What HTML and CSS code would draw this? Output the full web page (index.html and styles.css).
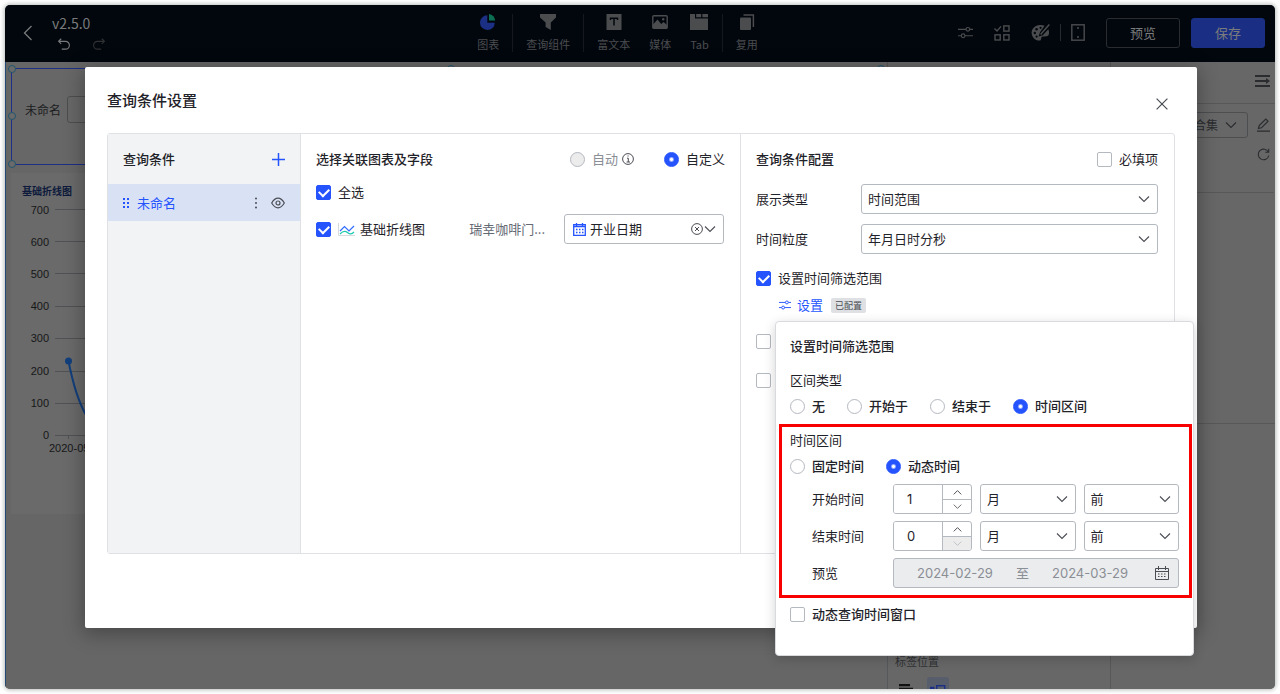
FILE: index.html
```html
<!DOCTYPE html>
<html lang="zh-CN">
<head>
<meta charset="utf-8">
<meta name="viewport" content="width=device-width, initial-scale=1">
<title>查询条件设置</title>
<link rel="stylesheet" href="styles.css">
</head>
<body>
<svg class="sprite" aria-hidden="true">
  <symbol id="chevron" viewBox="0 0 12 12"><path d="M1 3.5 6 8.5 11 3.5" fill="none" stroke="currentColor" stroke-width="1.1"/></symbol>
  <symbol id="chevron-up" viewBox="0 0 12 12"><path d="M1 8.5 6 3.5 11 8.5" fill="none" stroke="currentColor" stroke-width="1.3"/></symbol>
  <symbol id="undo" viewBox="0 0 14 14"><path d="M4 .8 1.2 3.6 4 6.4M1.2 3.6H8.6a4.2 4.2 0 0 1 0 8.4H4.6" fill="none" stroke="currentColor" stroke-width="1.2"/></symbol>
  <symbol id="sliders" viewBox="0 0 14 12"><g fill="none" stroke="currentColor" stroke-width="1.1"><path d="M0 3H7.5M11 3H14M0 9H3M6.5 9H14"/><circle cx="9.2" cy="3" r="1.7"/><circle cx="4.8" cy="9" r="1.7"/></g></symbol>
</svg>

<div class="app">
  <header class="topbar">
    <div class="topbar-left">
      <button class="icon-btn" aria-label="返回"><svg width="10" height="16" viewBox="0 0 10 16"><path d="M8.5 1 1.5 8l7 7" fill="none" stroke="currentColor" stroke-width="1.3"/></svg></button>
      <div class="version">
        <span>v2.5.0</span>
        <div class="history">
          <button class="icon-btn" aria-label="撤销"><svg width="14" height="13"><use href="#undo"/></svg></button>
          <button class="icon-btn redo" aria-label="重做"><svg width="14" height="13"><use href="#undo"/></svg></button>
        </div>
      </div>
    </div>
    <nav class="tools">
      <button class="tool"><svg width="16" height="16" viewBox="0 0 16 16"><path d="M7.3 1.2V8.7H14.8A7.4 7.4 0 1 1 7.3 1.2Z" fill="#1b3084"/><path d="M9 0A7 7 0 0 1 15.2 6.6H9Z" fill="#0c6f53"/></svg>图表</button>
      <i class="rule"></i>
      <button class="tool"><svg width="16" height="16" viewBox="0 0 16 16"><path d="M0 0H16V3.5L10.8 8.4V16L5.6 13V8.4L0 3.5Z" fill="currentColor"/></svg>查询组件</button>
      <i class="rule"></i>
      <div class="tool-group">
        <button class="tool"><svg width="16" height="16" viewBox="0 0 16 16"><path d="M1 0H15V16H1Z" fill="currentColor" stroke="currentColor"/><path d="M4.5 6V4.2H11.5V6M8 4.2V11.4" fill="none" stroke="#02070e" stroke-width="1.5"/></svg>富文本</button>
        <button class="tool"><svg width="16" height="16" viewBox="0 0 16 16"><rect x=".8" y="1.8" width="14.4" height="12.6" rx="1" fill="none" stroke="currentColor" stroke-width="1.4"/><path d="M1 10.5 5.5 5.5 9.2 10 11.6 8 15 11V14H1Z" fill="currentColor"/><circle cx="11.2" cy="5.3" r="1.2" fill="currentColor"/></svg>媒体</button>
        <button class="tool"><svg width="18" height="16" viewBox="0 0 18 16"><path d="M0 0H5V4.6H18V16H0ZM6.2 0H11.2V3.2H6.2ZM12.4 0H18V3.2H12.4Z" fill="currentColor"/></svg>Tab</button>
      </div>
      <i class="rule"></i>
      <button class="tool"><svg width="16" height="16" viewBox="0 0 16 16"><rect x="1" y="3.5" width="11" height="12.5" rx="1" fill="currentColor"/><path d="M4.5 1H14.4V13" fill="none" stroke="currentColor" stroke-width="1.5"/></svg>复用</button>
    </nav>
    <div class="topbar-right">
      <button class="icon-btn" aria-label="参数"><svg width="15" height="13"><use href="#sliders"/></svg></button>
      <button class="icon-btn" aria-label="组件"><svg width="16" height="16" viewBox="0 0 16 16"><g fill="none" stroke="currentColor" stroke-width="1.4"><path d="M.5 3.6 3 6 7 1.4"/><rect x="9.8" y=".9" width="5.2" height="5.2"/><rect x="1" y="9.8" width="5.2" height="5.2"/><rect x="9.8" y="9.8" width="5.2" height="5.2"/></g></svg></button>
      <button class="icon-btn" aria-label="主题"><svg width="19" height="17" viewBox="0 0 19 17"><path d="M13.6 1.8A9 7.6 0 0 0 .6 8.4C.6 12.600 4 16.600 8.400 16.600 10.800 16.600 9.600 14 11 12.800 12.800 11.600 18 14.200 18 8.800A7.400 7.400 0 0 0 17.300 5.200L11.800 11.200 7.600 12.400 9 8.200Z" fill="currentColor"/><path d="M18.300.6 9.600 10.600" stroke="currentColor" stroke-width="1.500"/><g fill="#02070e"><circle cx="3.800" cy="9" r="1.200"/><circle cx="5.600" cy="5.300" r="1.200"/><circle cx="9.600" cy="3.800" r="1.100"/><circle cx="5.600" cy="12.600" r="1.100"/></g></svg></button>
      <i class="rule rule-short"></i>
      <button class="icon-btn" aria-label="移动端"><svg width="14" height="17" viewBox="0 0 14 17"><rect x=".8" y=".8" width="12.4" height="15.4" fill="none" stroke="currentColor" stroke-width="1.4"/><path d="M6 4H8M6 13H8" stroke="currentColor" stroke-width="1.4"/></svg></button>
      <button class="btn">预览</button>
      <button class="btn btn-save">保存</button>
    </div>
  </header>

  <main class="workspace">
    <section class="canvas">
      <div class="filter-widget">
        <label for="bg-filter">未命名</label>
        <input id="bg-filter" type="text">
        <i class="handle h-tl"></i><i class="handle h-ml"></i><i class="handle h-bl"></i><i class="handle h-tc"></i><i class="handle h-tr"></i>
      </div>
      <div class="chart-card">
        <h3>基础折线图</h3>
        <svg class="chart" width="860" height="280" viewBox="0 0 860 280">
          <g class="grid"><path d="M44 12.5H850M44 44.5H850M44 76.5H850M44 109.5H850M44 141.5H850M44 174.5H850M44 206.5H850M44 238.5H850M57.500 239V242"/></g>
          <g class="axis" text-anchor="end"><text x="38" y="17">700</text><text x="38" y="49">600</text><text x="38" y="81">500</text><text x="38" y="113">400</text><text x="38" y="145">300</text><text x="38" y="178">200</text><text x="38" y="210">100</text><text x="38" y="242">0</text></g>
          <text class="axis" x="38" y="255">2020-05</text>
          <path class="series" d="M57.500 164C61 182 67 204 75 218"/>
          <circle cx="57.500" cy="164" r="3.5" fill="#123f7c"/>
        </svg>
      </div>
    </section>
    <aside class="style-panel">
      <span>标签位置</span>
      <div class="position-options">
        <button class="position" aria-label="顶部"><svg width="14" height="12" viewBox="0 0 14 12"><path d="M0 1.2H11M0 4.8H14M0 8.4H14" stroke="#111" stroke-width="2.2"/></svg></button>
        <button class="position position-on" aria-label="左侧"><svg width="16" height="12" viewBox="0 0 16 12"><path d="M0 4H4.5" stroke="#1b3084" stroke-width="2.4"/><rect x="6.7" y="1.7" width="8" height="8" fill="none" stroke="#1b3084" stroke-width="1.4"/></svg></button>
      </div>
    </aside>
    <aside class="data-panel">
      <div class="data-head"><button class="icon-btn" aria-label="收起"><svg width="15" height="12" viewBox="0 0 15 12"><path d="M0 1H15M0 6H12M0 11H15" stroke="currentColor" stroke-width="2"/><path d="M11 3 15 6 11 9Z" fill="currentColor"/></svg></button></div>
      <div class="data-body">
        <div class="data-row">
          <div class="select dataset"><select aria-label="数据集"><option>数据合集</option></select><svg width="12" height="12"><use href="#chevron"/></svg></div>
          <button class="icon-btn" aria-label="编辑"><svg width="13" height="14" viewBox="0 0 13 14"><path d="M1.500 10.500 2.200 7.500 8.800 1 11 3.200 4.500 9.800ZM0 13.200H13" fill="none" stroke="currentColor" stroke-width="1.200"/></svg></button>
        </div>
        <button class="icon-btn" aria-label="刷新"><svg width="13" height="13" viewBox="0 0 13 13"><path d="M11.300 4A5.300 5.300 0 1 0 11.800 7.500M11.700.8V4.300H8.300" fill="none" stroke="currentColor" stroke-width="1.100"/></svg></button>
      </div>
      <div class="data-fields"></div>
    </aside>
  </main>

  <div class="modal" role="dialog" aria-labelledby="modal-title">
    <div class="modal-head">
      <h1 id="modal-title">查询条件设置</h1>
      <button class="icon-btn close" aria-label="关闭"><svg width="12" height="12" viewBox="0 0 12 12"><path d="M.6.6 11.400 11.400M11.400.6.6 11.400" stroke="currentColor" stroke-width="1.200"/></svg></button>
    </div>
    <div class="board">
      <section class="conditions">
        <div class="col-head"><h2>查询条件</h2><button class="icon-btn add" aria-label="添加"><svg width="13" height="13" viewBox="0 0 13 13"><path d="M6.500 0V13M0 6.500H13" stroke="currentColor" stroke-width="1.500"/></svg></button></div>
        <div class="condition">
          <svg width="6" height="10" viewBox="0 0 6 10" fill="#2554ff"><path d="M0 0H2V2H0ZM4 0H6V2H4ZM0 4H2V6H0ZM4 4H6V6H4ZM0 8H2V10H0ZM4 8H6V10H4Z"/></svg>
          <span>未命名</span>
          <button class="icon-btn" aria-label="更多"><svg width="4" height="12" viewBox="0 0 4 12" fill="currentColor"><circle cx="2" cy="1.500" r="1"/><circle cx="2" cy="6" r="1"/><circle cx="2" cy="10.500" r="1"/></svg></button>
          <button class="icon-btn" aria-label="显示"><svg width="14" height="12" viewBox="0 0 14 12" fill="none" stroke="currentColor" stroke-width="1.200"><path d="M.7 6Q3.500 1.200 7 1.200T13.300 6Q10.500 10.800 7 10.800T.7 6Z"/><circle cx="7" cy="6" r="2"/></svg></button>
        </div>
      </section>

      <section class="linked">
        <div class="col-head">
          <h2>选择关联图表及字段</h2>
          <div class="modes">
            <label class="check muted"><input type="radio" name="mode" disabled>自动<svg width="12" height="12" viewBox="0 0 12 12" class="info"><g fill="none" stroke="currentColor"><circle cx="6" cy="6" r="5.400"/><path d="M5 5.200H6.300V9M4.600 9H8M5.500 3H6.600"/></g></svg></label>
            <label class="check"><input type="radio" name="mode" checked>自定义</label>
          </div>
        </div>
        <label class="check all"><input type="checkbox" checked>全选</label>
        <div class="chart-row">
          <label class="check"><input type="checkbox" checked><svg width="17" height="13" viewBox="0 0 17 13" fill="none"><path d="M.5 0V12.500H17" stroke="#d6d9de"/><path d="M2 8 6.500 3.500 11 8 16 3" stroke="#2f6bff" stroke-width="1.200"/><path d="M2 11Q6 6.500 9.500 9.500T16 9" stroke="#1cc9b0" stroke-width="1.200"/></svg><span class="chart-name">基础折线图</span></label>
          <span class="dataset-name">瑞幸咖啡门...</span>
          <div class="field">
            <svg width="13" height="13" viewBox="0 0 13 13"><path d="M.7 1.700H12.300V12.300H.7ZM.7 3.500H12.300M3.500 0V3M9.500 0V3" fill="none" stroke="#2554ff" stroke-width="1.300"/><path d="M3 6.500H10.500M3 9.500H10.500" stroke="#2554ff" stroke-width="1.500" stroke-dasharray="1.500 1.500"/></svg>
            <select aria-label="字段"><option>开业日期</option></select>
            <button class="icon-btn" aria-label="清除"><svg width="12" height="12" viewBox="0 0 12 12" fill="none" stroke="currentColor"><circle cx="6" cy="6" r="5.400"/><path d="M4 4 8 8M8 4 4 8"/></svg></button>
            <svg width="12" height="12"><use href="#chevron"/></svg>
          </div>
        </div>
      </section>

      <section class="config">
        <div class="col-head"><h2>查询条件配置</h2><label class="check"><input type="checkbox">必填项</label></div>
        <div class="form">
          <label for="kind">展示类型</label>
          <div class="select"><select id="kind"><option>时间范围</option></select><svg width="12" height="12"><use href="#chevron"/></svg></div>
          <label for="grain">时间粒度</label>
          <div class="select"><select id="grain"><option>年月日时分秒</option></select><svg width="12" height="12"><use href="#chevron"/></svg></div>
        </div>
        <label class="check range-check"><input type="checkbox" checked>设置时间筛选范围</label>
        <div class="range-set">
          <button class="link"><svg width="12" height="12" viewBox="0 0 14 12"><use href="#sliders"/></svg>设置</button>
          <span class="tag">已配置</span>
        </div>
        <div class="extra"><input type="checkbox" aria-label="默认值"><input type="checkbox" aria-label="提示"></div>
      </section>
    </div>

    <div class="popover" role="dialog" aria-labelledby="pop-title">
      <h2 id="pop-title">设置时间筛选范围</h2>
      <p class="pop-label">区间类型</p>
      <div class="radios">
        <label class="check"><input type="radio" name="kind">无</label>
        <label class="check"><input type="radio" name="kind">开始于</label>
        <label class="check"><input type="radio" name="kind">结束于</label>
        <label class="check"><input type="radio" name="kind" checked>时间区间</label>
      </div>
      <section class="interval">
        <p>时间区间</p>
        <div class="radios">
          <label class="check"><input type="radio" name="time">固定时间</label>
          <label class="check"><input type="radio" name="time" checked>动态时间</label>
        </div>
        <div class="offset">
          <label for="start">开始时间</label>
          <div class="stepper"><input id="start" type="text" value="1"><button aria-label="增加"><svg width="9" height="9"><use href="#chevron-up"/></svg></button><button aria-label="减少"><svg width="9" height="9"><use href="#chevron"/></svg></button></div>
          <div class="select"><select aria-label="开始单位"><option>月</option></select><svg width="12" height="12"><use href="#chevron"/></svg></div>
          <div class="select"><select aria-label="开始方向"><option>前</option></select><svg width="12" height="12"><use href="#chevron"/></svg></div>
          <label for="end">结束时间</label>
          <div class="stepper"><input id="end" type="text" value="0"><button aria-label="增加"><svg width="9" height="9"><use href="#chevron-up"/></svg></button><button aria-label="减少" disabled><svg width="9" height="9"><use href="#chevron"/></svg></button></div>
          <div class="select"><select aria-label="结束单位"><option>月</option></select><svg width="12" height="12"><use href="#chevron"/></svg></div>
          <div class="select"><select aria-label="结束方向"><option>前</option></select><svg width="12" height="12"><use href="#chevron"/></svg></div>
          <label for="from">预览</label>
          <div class="preview">
            <input id="from" type="text" value="2024-02-29" disabled><span>至</span><input type="text" aria-label="结束日期" value="2024-03-29" disabled>
            <svg width="14" height="14" viewBox="0 0 14 14" fill="none" stroke="currentColor"><path d="M.5 2.500H13.500V13.500H.5ZM.5 5.500H13.500M3.500 0V4M10.500 0V4"/><path d="M3 8H11.500M3 10.500H11.500" stroke-dasharray="1.500 1.500"/></svg>
          </div>
        </div>
      </section>
      <label class="check window-check"><input type="checkbox">动态查询时间窗口</label>
    </div>
  </div>
</div>
</body>
</html>
```
FILE: styles.css
```css
* { box-sizing: border-box; }

body {
  margin: 0;
  padding: 5px;
  height: 100vh;
  overflow: hidden;
  background: #fff;
  color: #1f2329;
  font: 13px/20px "Noto Sans CJK SC", "Noto Sans", sans-serif;
}

h1, h2, h3, p { margin: 0; }
h1 { font-size: 15px; font-weight: 500; }
h2 { font-size: 13px; font-weight: 500; }
svg { display: block; flex: none; }
.sprite { position: absolute; width: 0; height: 0; }

button, input, select { font: inherit; color: inherit; margin: 0; }
button { padding: 0; border: 0; background: none; }
.icon-btn { display: flex; flex: none; }

.app {
  position: relative;
  display: flex;
  flex-direction: column;
  height: 100%;
  border-radius: 5px;
  background: #676767;
  box-shadow: 0 0 4px 1px #b8baba;
}

/* Top bar */
.topbar {
  display: grid;
  grid-template-columns: 472fr auto 517fr;
  align-items: center;
  height: 57px;
  padding-bottom: 2px;
  flex: none;
  border-radius: 5px 5px 0 0;
  background: #02070e;
  color: #4b4c4e;
}
.topbar-left { display: flex; align-items: center; gap: 19px; padding-left: 18px; color: #797a7b; }
.version { font-size: 14px; line-height: 18px; }
.version > span { display: block; }
.history { display: flex; gap: 21px; padding: 6px 0 0 5px; }
.redo { color: #303133; transform: scaleX(-1); }
.tools { display: flex; align-items: center; gap: 13px; font-size: 11px; }
.tool-group { display: flex; gap: 19px; }
.tool { display: flex; flex-direction: column; align-items: center; gap: 6px; line-height: 16px; }
.rule { width: 1px; height: 38px; background: #15191f; }
.rule-short { height: 17px; background: #26292e; margin: 0 -11px; }
.topbar-right { display: flex; align-items: center; justify-content: flex-end; gap: 21px; padding-right: 10px; }
.btn { width: 74px; height: 30px; border: 1px solid #2a2c2f; border-radius: 3px; line-height: 24px; color: #7a7b7c; }
.btn-save { margin-left: -10px; border-color: #1a2f84; background: #1a2f84; }

/* Workspace behind the dialog */
.workspace { display: flex; flex: 1; min-height: 0; overflow: hidden; border-radius: 0 0 5px 5px; color: #1b1c1e; }
.canvas { flex: 1; min-width: 0; padding: 6px 5px 0; border-left: 1px solid #234a74; background: #656665; }
.filter-widget {
  position: relative;
  display: flex;
  align-items: center;
  gap: 6px;
  height: 97px;
  padding: 0 13px 14px;
  border: 1px solid #1d2f86;
  background: #676767;
  font-size: 12px;
}
.filter-widget input { width: 200px; height: 27px; border: 1px solid #4d4e50; border-radius: 3px; background: transparent; }
.handle { position: absolute; width: 8px; height: 8px; border: 1px solid #21566f; border-radius: 50%; background: #6a6a6a; }
.h-tl { left: -4px; top: -4px; }
.h-ml { left: -4px; top: 43px; }
.h-bl { left: -4px; bottom: -4px; }
.h-tc { left: 50%; top: -4px; }
.h-tr { right: -4px; top: -4px; }
.chart-card { margin-top: 8px; height: 341px; padding-top: 8px; background: #6a6a6a; }
.chart-card h3 { padding-left: 11px; color: #0d1a3c; font-size: 10px; line-height: 20px; font-weight: 700; }
.chart { margin-top: -4px; }
.grid { stroke: #4f5154; }
.axis { font: 11px "Liberation Sans", Arial, sans-serif; fill: #161718; }
.series { fill: none; stroke: #123f7c; stroke-width: 2; }

.style-panel {
  display: flex;
  flex-direction: column;
  justify-content: flex-end;
  gap: 6px;
  width: 223px;
  padding-left: 7px;
  border-left: 1px solid #575859;
  background: #676767;
  color: #303234;
  font-size: 11px;
}
.position-options { display: flex; gap: 10px; height: 12px; overflow: hidden; }
.position { display: flex; justify-content: center; width: 22px; height: 22px; padding-top: 7px; border-radius: 3px; }
.position-on { background: #585d6c; }

.data-panel { width: 165px; border-left: 1px solid #575859; background: #676767; color: #2a2c2f; }
.data-head { display: flex; justify-content: flex-end; height: 42px; padding: 13px 5px; border-bottom: 1px solid #575859; }
.data-body { display: flex; flex-direction: column; align-items: flex-end; gap: 10px; height: 89px; padding: 8px 4px 8px 5px; margin-right: 1px; border-bottom: 1px solid #575859; }
.data-row { display: flex; align-items: center; gap: 9px; }
.data-fields { height: 231px; border-bottom: 1px solid #575859; }

/* Form controls */
input[type="checkbox"], input[type="radio"] {
  appearance: none;
  display: grid;
  place-content: center;
  flex: none;
  width: 15px;
  height: 15px;
  border: 1px solid #b4b8bf;
  border-radius: 2px;
  background: #fff;
}
input[type="radio"] { border-radius: 50%; }
input[type="checkbox"]:checked { border-color: #2554ff; background: #2554ff; }
input[type="checkbox"]:checked::after {
  content: "";
  width: 8px;
  height: 5px;
  margin-bottom: 2px;
  border: solid #fff;
  border-width: 0 0 2px 2px;
  transform: rotate(-45deg);
}
input[type="radio"]:checked { border-color: #2554ff; background: radial-gradient(#fff 1px, #2554ff 3px); }
input[type="radio"]:disabled { background: #ececed; }
.check { display: flex; align-items: center; gap: 7px; white-space: nowrap; }
.muted { color: #8a8e95; }
.info { margin-left: -3px; color: #4a4d53; }

.select { display: grid; align-items: center; min-width: 0; }
.select > * { grid-area: 1 / 1; }
.select select {
  appearance: none;
  width: 100%;
  height: 30px;
  padding: 0 24px 0 6px;
  border: 1px solid #b4b8bf;
  border-radius: 3px;
  background: #fff;
}
.select svg { justify-self: end; margin-right: 8px; color: #4a4d53; pointer-events: none; }
.dataset { width: 100px; font-size: 12px; }
.dataset select { height: 26px; padding-left: 21px; border-color: #4d4e50; background: transparent; }
.dataset svg { margin-right: 11px; color: #2a2c2f; }

/* Dialog */
.modal {
  position: absolute;
  inset: 62px 78px 61px 80px;
  display: flex;
  flex-direction: column;
  padding: 0 22px 74px;
  border-radius: 2px;
  background: #fff;
  box-shadow: 0 4px 20px 2px #0000004d;
}
.modal-head { display: flex; align-items: center; justify-content: space-between; height: 66px; flex: none; }
.close { margin: 8px 7px 0 0; color: #4a4d53; }
.board {
  display: grid;
  grid-template-columns: 193fr 440fr 433fr;
  flex: 1;
  min-height: 0;
  border: 1px solid #dfe1e5;
  border-radius: 3px;
}
.col-head { display: flex; align-items: center; justify-content: space-between; height: 50px; }
.conditions { border-right: 1px solid #dfe1e5; background: #f2f3f5; }
.conditions .col-head { padding: 0 15px; }
.add { color: #2554ff; }
.condition { display: flex; align-items: center; height: 37px; padding: 0 15px; gap: 13px; background: #d9e1f5; color: #4a4d53; }
.condition span { flex: 1; margin-left: -5px; color: #2554ff; }
.linked { padding: 0 16px 0 15px; border-right: 1px solid #dfe1e5; }
.modes { display: flex; gap: 30px; margin-right: -1px; }
.all { height: 16px; }
.chart-row { display: flex; align-items: center; margin-top: 14px; }
.chart-name { margin-left: -2px; }
.dataset-name { margin-left: auto; padding-right: 19px; color: #646a73; }
.field {
  display: flex;
  align-items: center;
  width: 160px;
  height: 30px;
  padding: 0 7px 0 8px;
  border: 1px solid #b4b8bf;
  border-radius: 3px;
  color: #4a4d53;
}
.field select { appearance: none; flex: 1; min-width: 0; padding: 0 4px; border: 0; background: none; color: #1f2329; }
.field .icon-btn { margin-right: 1px; }

.config { padding: 0 16px 0 15px; }
.form { display: grid; grid-template-columns: 105px 1fr; align-items: center; gap: 10px 0; }
.range-check { height: 16px; margin-top: 16px; }
.range-set { display: flex; align-items: center; gap: 8px; margin: 9px 0 0 23px; height: 20px; }
.link { display: flex; align-items: center; gap: 6px; color: #2554ff; }
.tag { padding: 0 4px; border-radius: 2px; background: #dee0e3; color: #4a4d53; font-size: 9px; line-height: 15px; }
.extra { display: grid; gap: 24px; margin-top: 19px; }

/* Time range popover */
.popover {
  position: absolute;
  top: 254px;
  right: 3px;
  width: 419px;
  padding: 14px 1px 31px 3px;
  border: 1px solid #d8dade;
  border-radius: 4px;
  background: #fff;
  box-shadow: 0 3px 12px #0000002e;
}
.popover h2, .pop-label, .popover > .radios, .window-check { margin-left: 11px; }
.pop-label { margin-top: 14px; }
.radios { display: flex; gap: 22px; margin-top: 6px; font-weight: 500; }
.interval { margin-top: 8px; padding: 3px 10px 7px 8px; border: 3px solid #f80000; }
.offset {
  display: grid;
  grid-template-columns: 73px 79px 1fr 1fr;
  align-items: center;
  gap: 7px 8px;
  margin-top: 8px;
  padding-left: 22px;
}
.stepper {
  display: grid;
  grid-template: 14px 14px / 1fr 29px;
  border: 1px solid #b4b8bf;
  border-radius: 3px;
  overflow: hidden;
}
.stepper input { grid-row: 1 / 3; min-width: 0; padding: 0 0 0 13px; border: 0; font-family: Inter, sans-serif; }
.stepper button { display: grid; place-items: center; border-left: 1px solid #b4b8bf; color: #4a4d53; }
.stepper button:last-child { border-top: 1px solid #b4b8bf; }
.stepper button:disabled { background: #ececed; color: #b4b8bf; }
.preview {
  grid-column: 2 / 5;
  display: flex;
  align-items: center;
  height: 30px;
  padding: 0 9px 0 23px;
  border: 1px solid #b4b8bf;
  border-radius: 3px;
  background: #ebecee;
  color: #8a8e95;
}
.preview input { width: 78px; padding: 0; border: 0; background: none; font-family: Inter, sans-serif; }
.preview span { padding: 0 23px 0 21px; }
.preview svg { margin-left: auto; color: #4a4d53; }
.window-check { margin-top: 6px; font-weight: 500; }
```
